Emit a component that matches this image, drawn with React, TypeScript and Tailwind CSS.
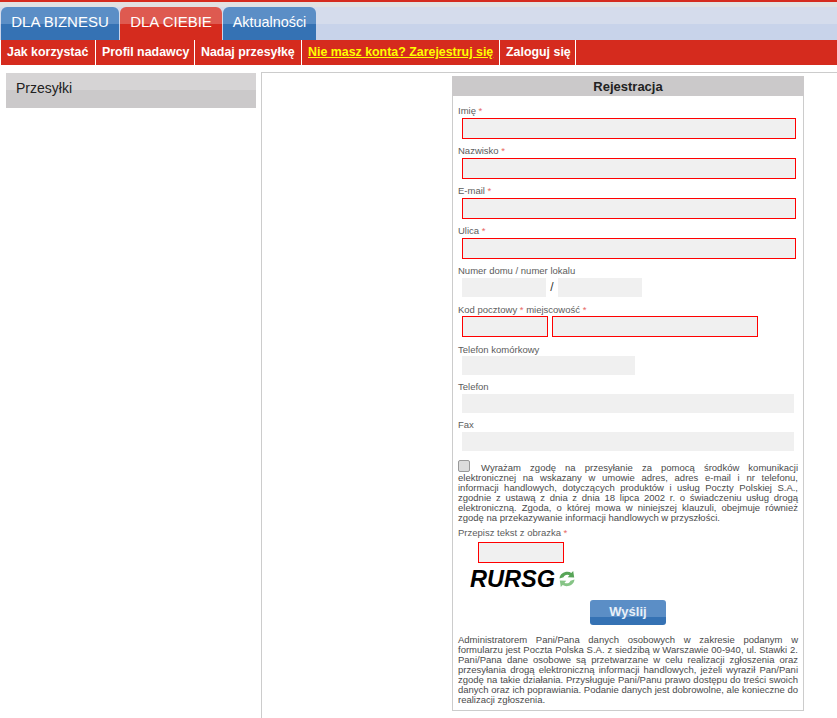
import React from 'react';

const font = 'font-["Liberation_Sans",Arial,sans-serif]';

const Req = () => <span className="text-[#e86a64]"> *</span>;

const Field = ({ label, req, width, error = req, labelPad = 'pt-[4px]' }: { label: string; req?: boolean; width: string; error?: boolean; labelPad?: string }) => (
  <div className="h-[38px]">
    <div className={`h-[18px] ${labelPad} pl-[5px] text-[9.5px] leading-[14px] text-[#5c5c5c]`}>
      {label}
      {req && <Req />}
    </div>
    <div className={`ml-[9px] ${width} bg-[#f0f0f0] ${error ? 'h-[21px] border border-[#f00]' : 'h-[19px]'}`} />
  </div>
);

const Refresh = () => (
  <svg width="18" height="16" viewBox="0 0 18 16" className="ml-[3px] mt-[6px]">
    <path d="M1.5 7.5C2 3 5.5.8 9.5.8c1.5 0 2.8.4 3.8 1.1L15.2 0l1 6.6-6.5-.4 1.8-1.9c-.6-.4-1.3-.6-2.2-.6-1.9 0-3.2.9-3.8 2.6z" fill="#58a558" />
    <path d="M16.5 8.5c-.5 4.5-4 6.7-8 6.7-1.5 0-2.8-.4-3.8-1.1L2.8 16l-1-6.6 6.5.4-1.8 1.9c.6.4 1.3.6 2.2.6 1.9 0 3.2-.9 3.8-2.6z" fill="#86c486" />
  </svg>
);

export default function App() {
  return (
    <div className={`${font} h-[718px] w-[837px] overflow-hidden bg-white`}>
      <div className="h-[2px] bg-[#d52b1e]" />
      <div className="h-[5px] bg-[#e2e2e2]" />

      {/* tabs */}
      <div className="flex h-[33px] gap-[1px] bg-[linear-gradient(#d5dcec_0,#d5dcec_17px,#c8d3ea_17px)] pl-[1px]">
        <div className="w-[118px] rounded-t-[6px] bg-[linear-gradient(#5b8ec6_0,#5b8ec6_17px,#3572b4_17px)] pt-[7px] text-center text-[15px] leading-[16px] text-white">DLA BIZNESU</div>
        <div className="w-[102px] rounded-t-[6px] bg-[linear-gradient(#de5a50_0,#de5a50_17px,#d52b1e_17px)] pt-[7px] text-center text-[15px] leading-[16px] text-white">DLA CIEBIE</div>
        <div className="w-[93px] rounded-t-[6px] bg-[linear-gradient(#5b8ec6_0,#5b8ec6_17px,#3572b4_17px)] pt-[7px] text-center text-[14.4px] leading-[16px] text-white">Aktualności</div>
      </div>

      {/* submenu */}
      <div className="ml-[1px] flex h-[25px] bg-[#d52b1e] text-[12.4px] font-bold leading-[24px] text-white">
        <div className="w-[95px] border-r border-white pl-[6px]">Jak korzystać</div>
        <div className="w-[99px] border-r border-white pl-[6px]">Profil nadawcy</div>
        <div className="w-[107px] border-r border-white pl-[6px]">Nadaj przesyłkę</div>
        <div className="w-[198px] border-r border-white pl-[6px] text-[#ffff00] underline">Nie masz konta? Zarejestruj się</div>
        <div className="w-[76px] border-r border-white pl-[6px]">Zaloguj się</div>
      </div>

      <div className="flex pl-[6px] pt-[7px]">
        {/* sidebar */}
        <div className="mt-[1px] h-[35px] w-[250px] bg-[linear-gradient(#d6d4d5_0,#d6d4d5_17px,#cbc9ca_17px)] pl-[10px] pt-[6px] text-[14px] leading-[18px] text-[#222]">
          Przesyłki
        </div>

        {/* main */}
        <div className="ml-[5px] h-[646px] flex-1 border-l border-t border-[#ccc] pl-[190px] pt-[3px]">
          <div className="h-[635px] w-[352px] border border-t-0 border-[#ccc]">
            <div className="-mx-[1px] h-[20px] bg-[#cbc9ca] pt-[1px] text-center text-[13px] font-bold leading-[20px] text-[#222]">Rejestracja</div>
            <div className="pt-[4px]">
              <div className="flex flex-col gap-[2px]">
                <Field label="Imię" req width="w-[334px]" />
                <Field label="Nazwisko" req width="w-[334px]" />
                <Field label="E-mail" req width="w-[334px]" />
                <Field label="Ulica" req width="w-[334px]" />
              </div>

              <div className="mt-[2px] h-[38px]">
                <div className="h-[18px] pl-[5px] pt-[4px] text-[9.5px] leading-[14px] text-[#5c5c5c]">Numer domu / numer lokalu</div>
                <div className="ml-[9px] flex h-[19px]">
                  <div className="w-[84px] bg-[#f0f0f0]" />
                  <div className="w-[12px] text-center text-[12px] leading-[19px] text-[#333]">/</div>
                  <div className="w-[84px] bg-[#f0f0f0]" />
                </div>
              </div>

              <div className="h-[40px]">
                <div className="h-[18px] pl-[5px] pt-[5px] text-[9.5px] leading-[14px] text-[#5c5c5c]">
                  Kod pocztowy<Req /> miejscowość<Req />
                </div>
                <div className="ml-[9px] flex gap-[4px]">
                  <div className="h-[21px] w-[86px] border border-[#f00] bg-[#f0f0f0]" />
                  <div className="h-[21px] w-[206px] border border-[#f00] bg-[#f0f0f0]" />
                </div>
              </div>

              <Field label="Telefon komórkowy" width="w-[173px]" labelPad="pt-[5px]" />
              <Field label="Telefon" width="w-[332px]" />
              <Field label="Fax" width="w-[332px]" />

              {/* consent */}
              <div className="mt-[7px] pl-[5px] pr-[5px] text-justify text-[9.5px] leading-[10px] text-[#4a4a4a]">
                <span className="relative top-[1px] mr-[11px] inline-block h-[12px] w-[12px] rounded-[2px] border border-[#999] bg-[#dcdcdc]" />
                Wyrażam zgodę na przesyłanie za pomocą środków komunikacji elektronicznej na wskazany w umowie adres, adres e-mail i nr telefonu, informacji handlowych, dotyczących produktów i usług Poczty Polskiej S.A., zgodnie z ustawą z dnia z dnia 18 lipca 2002 r. o świadczeniu usług drogą elektroniczną. Zgoda, o której mowa w niniejszej klauzuli, obejmuje również zgodę na przekazywanie informacji handlowych w przyszłości.
              </div>

              {/* captcha */}
              <div className="mt-[3px] h-[14px] pl-[5px] text-[9.5px] leading-[14px] text-[#5c5c5c]">
                Przepisz tekst z obrazka<Req />
              </div>
              <div className="ml-[25px] mt-[2px] h-[21px] w-[86px] border border-[#f00] bg-[#f0f0f0]" />
              <div className="ml-[17px] mt-[2px] flex h-[28px] items-start">
                <span className="text-[23.6px] font-bold italic leading-[28px] text-black">RURSG</span>
                <Refresh />
              </div>

              <div className="ml-[137px] mt-[7px] h-[25px] w-[76px] rounded-[3px] bg-[linear-gradient(#5b8ec6_0,#5b8ec6_17px,#3572b4_17px)] text-center text-[13px] font-bold leading-[24px] text-[#e8f0f8]">
                Wyślij
              </div>

              <div className="mt-[10px] pl-[5px] pr-[5px] text-justify text-[9.5px] leading-[10px] text-[#4a4a4a]">
                Administratorem Pani/Pana danych osobowych w zakresie podanym w formularzu jest Poczta Polska S.A. z siedzibą w Warszawie 00-940, ul. Stawki 2. Pani/Pana dane osobowe są przetwarzane w celu realizacji zgłoszenia oraz przesyłania drogą elektroniczną informacji handlowych, jeżeli wyraził Pan/Pani zgodę na takie działania. Przysługuje Pani/Panu prawo dostępu do treści swoich danych oraz ich poprawiania. Podanie danych jest dobrowolne, ale konieczne do realizacji zgłoszenia.
              </div>
            </div>
          </div>
        </div>
      </div>
    </div>
  );
}
